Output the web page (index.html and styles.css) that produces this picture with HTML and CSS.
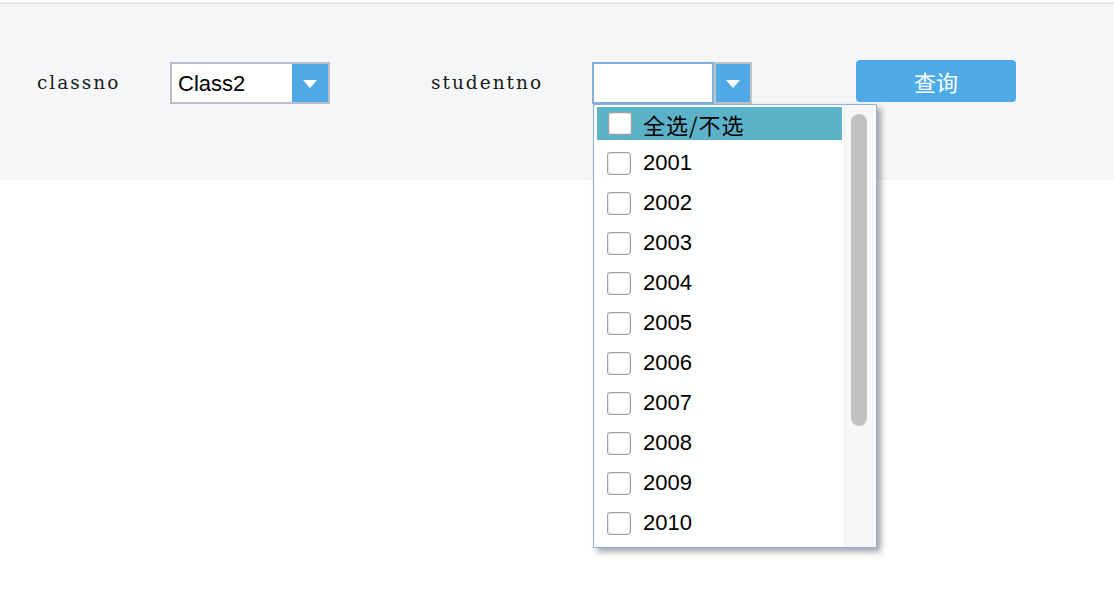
FILE: index.html
```html
<!DOCTYPE html>
<html>
<head>
<meta charset="utf-8">
<link rel="stylesheet" href="styles.css">
</head>
<body>
<div class="panel">
  <div class="row">
    <span class="label label-class">classno</span>
    <div class="combo combo-gray">
      <div class="combo-text">Class2</div>
      <div class="combo-btn"><span class="tri"></span></div>
    </div>
    <span class="label label-student">studentno</span>
    <div class="combo combo-active">
      <div class="combo-text"></div>
      <div class="combo-btn"><span class="tri"></span></div>
    </div>
    <button class="query">查询</button>
  </div>
</div>

<div class="dropdown">
  <div class="list">
    <div class="item item-all"><span class="cb"></span><span class="txt">全选/不选</span></div>
    <div class="item"><span class="cb"></span><span class="txt">2001</span></div>
    <div class="item"><span class="cb"></span><span class="txt">2002</span></div>
    <div class="item"><span class="cb"></span><span class="txt">2003</span></div>
    <div class="item"><span class="cb"></span><span class="txt">2004</span></div>
    <div class="item"><span class="cb"></span><span class="txt">2005</span></div>
    <div class="item"><span class="cb"></span><span class="txt">2006</span></div>
    <div class="item"><span class="cb"></span><span class="txt">2007</span></div>
    <div class="item"><span class="cb"></span><span class="txt">2008</span></div>
    <div class="item"><span class="cb"></span><span class="txt">2009</span></div>
    <div class="item"><span class="cb"></span><span class="txt">2010</span></div>
  </div>
  <div class="scroll"><div class="thumb"></div></div>
</div>
</body>
</html>
```

FILE: styles.css
```css
html, body {
  margin: 0;
  padding: 0;
  background: #ffffff;
}
body {
  font-family: "Liberation Sans", "Noto Sans CJK SC", sans-serif;
  padding-top: 2px;
}
.panel {
  height: 118px;
  background: #f5f6f8;
  border-top: 2px solid #e7e8ea;
  padding-top: 58px;
}
.row {
  display: flex;
  align-items: center;
  height: 42px;
  padding-left: 37px;
}
.label {
  font-family: "DejaVu Serif", "Liberation Serif", serif;
  font-size: 18.5px;
  letter-spacing: 2px;
  color: #1a1a1a;
  margin-top: -2px;
}
.label-class { width: 133px; }
.label-student { width: 161px; margin-left: 101px; }
.combo {
  display: flex;
  width: 160px;
  height: 42px;
  box-sizing: border-box;
}
.combo-gray {
  border: 2px solid #b8bccb;
}
.combo-gray .combo-text {
  flex: 1;
  background: #fff;
  font-size: 22px;
  line-height: 40px;
  padding-left: 6px;
  color: #000;
}
.combo-gray .combo-btn {
  width: 36px;
  background: #4ea9e6;
  display: flex;
  align-items: center;
  justify-content: center;
}
.combo-active .combo-text {
  width: 122px;
  background: #fff;
  border: 2px solid #84afdd;
  box-sizing: border-box;
}
.combo-active .combo-btn {
  width: 38px;
  background: #4ea9e6;
  border: 2px solid #c3c3c3;
  box-sizing: border-box;
  display: flex;
  align-items: center;
  justify-content: center;
}
.tri {
  width: 0;
  height: 0;
  border-left: 7px solid transparent;
  border-right: 7px solid transparent;
  border-top: 8px solid #ffffff;
  margin-top: 2px;
}
.query {
  margin-left: 104px;
  width: 160px;
  height: 42px;
  margin-bottom: 4px;
  border: none;
  border-radius: 4px;
  background: #4eaae7;
  color: #fff;
  font-family: "Noto Sans CJK SC", sans-serif;
  font-size: 22px;
  padding: 0;
}
.dropdown {
  position: absolute;
  left: 593px;
  top: 104px;
  width: 284px;
  height: 444px;
  box-sizing: border-box;
  border: 1px solid #8ab5e2;
  background: #fff;
  box-shadow: 4px 4px 6px rgba(0, 0, 0, 0.35);
  display: flex;
  padding: 2px 0 2px 3px;
}
.list {
  width: 245px;
  display: flex;
  flex-direction: column;
}
.item {
  display: flex;
  align-items: center;
  height: 40px;
  padding-left: 10px;
  font-size: 22px;
  color: #000;
}
.item-all {
  height: 33px;
  background: #5cb2c8;
  margin-bottom: 3px;
}
.cb {
  width: 24px;
  height: 23px;
  box-sizing: border-box;
  border: 1px solid #a0a0a0;
  border-radius: 3px;
  background: #fff;
  box-shadow: inset 0 0 2px rgba(0, 0, 0, 0.3);
  margin-right: 12px;
  flex: none;
}
.item-all .cb { margin-left: 1px; margin-right: 11px; }
.item-all .txt {
  font-family: "Noto Sans CJK SC", sans-serif;
  font-size: 22px;
  letter-spacing: 1px;
}
.scroll {
  margin-left: 2px;
  margin-top: -2px;
  margin-bottom: -2px;
  width: 30px;
  background: #f7f7f7;
  border-left: 1px solid #ececec;
  box-sizing: border-box;
  padding: 9px 0 0 6px;
}
.thumb {
  width: 16px;
  height: 312px;
  border-radius: 8px;
  background: #c1c1c1;
}
```
